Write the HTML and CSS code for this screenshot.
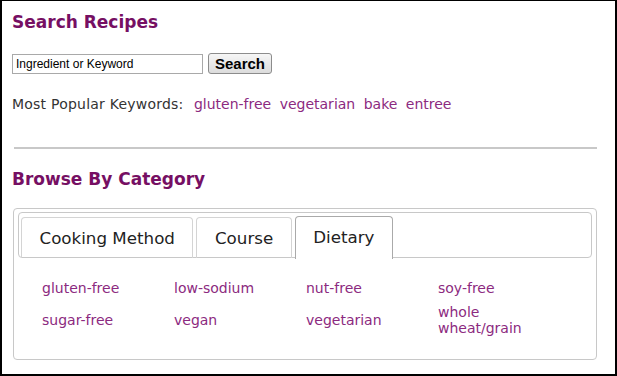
FILE: index.html
```html
<!DOCTYPE html>
<html lang="en">
<head>
  <meta charset="UTF-8">
  <title>Search Recipes</title>
  <link rel="stylesheet" href="styles.css">
</head>
<body>

<div class="frame">
  <h2 class="title">Search Recipes</h2>

  <form class="search-form" onsubmit="return false;">
    <input type="text" class="search-input" value="Ingredient or Keyword" aria-label="Search">
    <button class="search-btn">Search</button>
  </form>

  <p class="popular">
    <span class="popular-label">Most Popular Keywords:</span>
    <a href="#">gluten-free</a>
    <a href="#">vegetarian</a>
    <a href="#">bake</a>
    <a href="#">entree</a>
  </p>

  <hr class="divider">

  <h2 class="title">Browse By Category</h2>

  <div class="tab-box">
    <div class="tab-bar">
      <a href="#" class="tab">Cooking Method</a>
      <a href="#" class="tab">Course</a>
      <a href="#" class="tab active">Dietary</a>
    </div>
    <div class="tab-panel">
      <a href="#">gluten-free</a>
      <a href="#">low-sodium</a>
      <a href="#">nut-free</a>
      <a href="#">soy-free</a>
      <a href="#">sugar-free</a>
      <a href="#">vegan</a>
      <a href="#">vegetarian</a>
      <a href="#">whole wheat/grain</a>
    </div>
  </div>
</div>

</body>
</html>
```

FILE: styles.css
```css
body {
  margin: 0;
  padding: 0;
  background-color: #fff;
  font-family: "DejaVu Sans", Verdana, sans-serif;
}
.frame {
  width: 617px;
  height: 376px;
  box-sizing: border-box;
  border: 2px solid #000;
  border-top-width: 1px;
  padding: 10px 18px 0 10px;
  overflow: hidden;
}
.title {
  margin: 0;
  color: #760f63;
  font-size: 17px;
  font-weight: bold;
  line-height: 22px;
}
.search-form {
  display: flex;
  align-items: center;
  gap: 5px;
  margin-top: 20px;
}
.search-input {
  width: 191px;
  height: 20px;
  box-sizing: border-box;
  margin: 0;
  padding: 1px 3px;
  border: 1px solid #a9a9a9;
  font-family: "Liberation Sans", Arial, sans-serif;
  font-size: 12px;
  color: #000;
}
.search-btn {
  height: 21px;
  margin: 0;
  padding: 0 6px;
  border: 1px solid #8c8c8c;
  border-radius: 3px;
  background: linear-gradient(#f6f6f6, #dcdcdc);
  font-family: "Liberation Sans", Arial, sans-serif;
  font-size: 15px;
  font-weight: bold;
  color: #000;
}
.popular {
  margin: 21px 0 0;
  font-size: 14px;
  line-height: 18px;
  color: #333;
}
.popular-label {
  letter-spacing: 0.22px;
  margin-right: 2px;
}
.popular a {
  margin-left: 4px;
}
a {
  color: #8c2a80;
  text-decoration: none;
}
.divider {
  margin: 34px 0 0 2px;
  border: 0;
  border-top: 2px solid #c8c8c8;
}
.divider + .title {
  margin-top: 19px;
}
.tab-box {
  margin: 18px 0 0 1px;
  height: 152px;
  box-sizing: border-box;
  border: 1px solid #c8c8c8;
  border-radius: 4px;
  padding: 3px 4px;
}
.tab-bar {
  display: flex;
  gap: 3px;
  height: 46px;
  box-sizing: border-box;
  border: 1px solid #c8c8c8;
  border-radius: 4px;
  padding: 4px 0 0 2px;
}
.tab {
  display: block;
  height: 41px;
  box-sizing: border-box;
  padding: 0 17.5px;
  border: 1px solid #d4d4d4;
  border-bottom: 0;
  border-radius: 4px 4px 0 0;
  font-size: 16.7px;
  line-height: 40px;
  color: #222;
}
.tab.active {
  height: 43px;
  margin-top: -1px;
  border-color: #aaa;
  background: #fff;
}
.tab-panel {
  display: grid;
  grid-template-columns: repeat(4, 132px);
  row-gap: 8px;
  padding: 22px 0 0 24px;
  font-size: 14px;
  line-height: 16px;
  align-items: center;
}
.tab-panel a {
  padding-right: 40px;
}
```
